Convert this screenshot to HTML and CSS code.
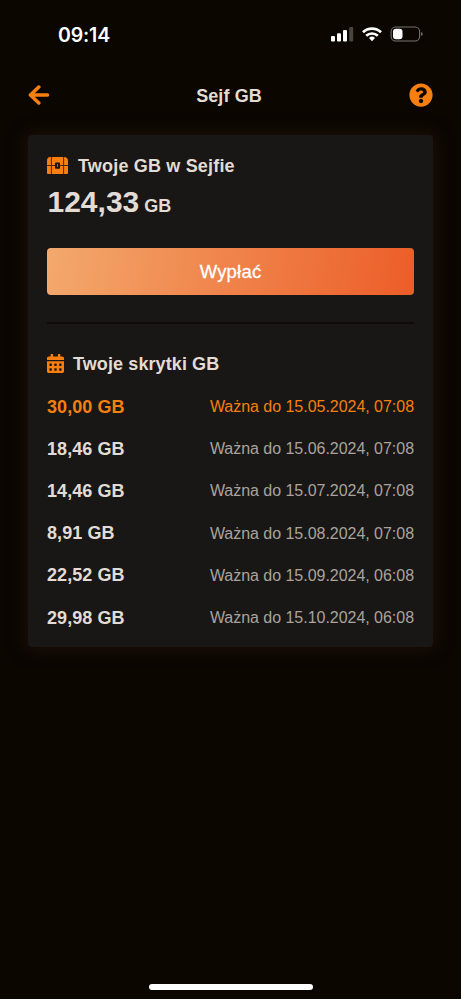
FILE: index.html
```html
<!DOCTYPE html>
<html lang="pl">
<head>
<meta charset="utf-8">
<title>Sejf GB</title>
<link rel="stylesheet" href="styles.css">
</head>
<body>
<div class="screen">
  <div class="status">
    <span class="time">09:14</span>
    <svg class="indicators" width="94" height="18" viewBox="0 0 94 18">
      <g fill="#fff">
        <rect x="1" y="11" width="4" height="5.5" rx="1.1"/>
        <rect x="7" y="8.3" width="4" height="8.2" rx="1.1"/>
        <rect x="13" y="5" width="4" height="11.5" rx="1.1"/>
        <rect x="19.2" y="2" width="4" height="14.5" rx="1.1" opacity=".25"/>
        <path d="M42 16.2l-3-3.2a4.4 4.4 0 0 1 6 0z"/>
      </g>
      <g fill="none" stroke="#fff" stroke-width="2.7">
        <path d="M36.2 10.8a8.5 8.5 0 0 1 11.6 0"/>
        <path d="M33 7.2a13 13 0 0 1 18 0"/>
      </g>
      <rect x="61.1" y="2" width="28.5" height="14" rx="4.6" fill="none" stroke="#77736d" stroke-width="1.1"/>
      <rect x="63" y="3.8" width="9.5" height="10.5" rx="3" fill="#fff"/>
      <path d="M91.1 6.9q1.600.6 1.600 2.100t-1.600 2.100z" fill="#77736d"/>
    </svg>
  </div>
  <header class="topbar">
    <svg width="22" height="20" viewBox="0 0 22 20" fill="none" stroke="#f77f10" stroke-width="3.5" stroke-linecap="round" stroke-linejoin="round"><path d="M10.800 2L2.400 10l8.400 8M3 10h16.500"/></svg>
    <h1>Sejf GB</h1>
    <svg width="24" height="24" viewBox="0 0 512 512" fill="#f77f10"><path d="M504 256c0 136.997-111.043 248-248 248S8 392.997 8 256C8 119.083 119.043 8 256 8s248 111.083 248 248zM262.655 90c-54.497 0-89.255 22.957-116.549 63.758-3.536 5.286-2.353 12.415 2.715 16.258l34.699 26.31c5.205 3.947 12.621 3.008 16.665-2.122 17.864-22.658 30.113-35.797 57.303-35.797 20.429 0 45.698 13.148 45.698 32.958 0 14.976-12.363 22.667-32.534 33.976C247.128 238.528 216 254.941 216 296v4c0 6.627 5.373 12 12 12h56c6.627 0 12-5.373 12-12v-1.333c0-28.462 83.186-29.647 83.186-106.667 0-58.002-60.165-102-116.531-102zM256 338c-25.365 0-46 20.635-46 46 0 25.364 20.635 46 46 46s46-20.636 46-46c0-25.365-20.635-46-46-46z"/></svg>
  </header>
  <main class="card">
    <h2 class="heading vault">
      <svg width="21" height="17" viewBox="0 0 21 17"><path fill="#f77f10" d="M3.200 0h13.600Q21 .2 21 4v12q0 1-1 1H1q-1 0-1-1V4Q0 .2 3.200 0z"/><path d="M4.400 0v17M16.600 0v17M0 8.500h21" fill="none" stroke="#4a2a10" stroke-width="1"/><rect x="8" y="5.500" width="5" height="6.200" rx=".8" fill="#1b1510"/><path d="M10 7h1v3h-1z" fill="#b9640f"/></svg>
      <span>Twoje GB w Sejfie</span>
    </h2>
    <p class="total"><span class="amount">124,33</span><span class="unit">GB</span></p>
    <button class="withdraw">Wypłać</button>
    <hr>
    <h2 class="heading lockers">
      <svg width="17" height="19" viewBox="0 0 448 512" preserveAspectRatio="none" fill="#f77f10"><path d="M0 464c0 26.500 21.500 48 48 48h352c26.500 0 48-21.500 48-48V192H0v272zm320-196c0-6.600 5.400-12 12-12h40c6.600 0 12 5.400 12 12v40c0 6.600-5.400 12-12 12h-40c-6.600 0-12-5.400-12-12v-40zm0 128c0-6.600 5.400-12 12-12h40c6.600 0 12 5.400 12 12v40c0 6.600-5.400 12-12 12h-40c-6.600 0-12-5.400-12-12v-40zM192 268c0-6.600 5.400-12 12-12h40c6.600 0 12 5.400 12 12v40c0 6.600-5.400 12-12 12h-40c-6.600 0-12-5.400-12-12v-40zm0 128c0-6.600 5.400-12 12-12h40c6.600 0 12 5.400 12 12v40c0 6.600-5.400 12-12 12h-40c-6.600 0-12-5.400-12-12v-40zM64 268c0-6.600 5.400-12 12-12h40c6.600 0 12 5.400 12 12v40c0 6.600-5.400 12-12 12H76c-6.600 0-12-5.400-12-12v-40zm0 128c0-6.600 5.400-12 12-12h40c6.600 0 12 5.400 12 12v40c0 6.600-5.400 12-12 12H76c-6.600 0-12-5.400-12-12v-40zM400 64h-48V16c0-8.800-7.200-16-16-16h-32c-8.800 0-16 7.200-16 16v48H160V16c0-8.800-7.200-16-16-16h-32c-8.800 0-16 7.200-16 16v48H48C21.500 64 0 85.500 0 112v48h448v-48c0-26.500-21.500-48-48-48z"/></svg>
      <span>Twoje skrytki GB</span>
    </h2>
    <ul class="list">
      <li class="current"><b>30,00 GB</b><span>Ważna do 15.05.2024, 07:08</span></li>
      <li><b>18,46 GB</b><span>Ważna do 15.06.2024, 07:08</span></li>
      <li><b>14,46 GB</b><span>Ważna do 15.07.2024, 07:08</span></li>
      <li><b>8,91 GB</b><span>Ważna do 15.08.2024, 07:08</span></li>
      <li><b>22,52 GB</b><span>Ważna do 15.09.2024, 06:08</span></li>
      <li><b>29,98 GB</b><span>Ważna do 15.10.2024, 06:08</span></li>
    </ul>
  </main>
  <div class="home"></div>
</div>
</body>
</html>
```
FILE: styles.css
```css
* { box-sizing: border-box; margin: 0; padding: 0; }
body { background: #0b0600; color: #e3dcd5; font-family: "Liberation Sans", Arial, sans-serif; }
.screen { height: 999px; display: flex; flex-direction: column; overflow: hidden; }
.status { height: 68px; padding: 0 37px 0 58px; display: flex; align-items: center; justify-content: space-between; }
.time { font: 600 19.5px/24px Inter, sans-serif; color: #fff; letter-spacing: -.15px; padding-top: 1px; }
.topbar { height: 54px; padding: 0 28px 0 28px; display: flex; align-items: center; justify-content: space-between; }
h1 { font-size: 18px; line-height: 24px; padding-top: 1px; margin-left: -1px; letter-spacing: .1px; }
.card { margin: 13px 28px 0; height: 512px; padding: 19px 19px 0; border-radius: 4px; background: #181715; box-shadow: 0 0 16px 3px #1b1108; display: flex; flex-direction: column; }
.heading { display: flex; align-items: center; font-size: 18px; line-height: 24px; height: 24px; flex: none; }
.heading svg { margin-bottom: 1px; }
.vault { gap: 10px; letter-spacing: .18px; }
.lockers { gap: 9px; letter-spacing: .1px; }
.lockers svg { margin-bottom: 2px; }
.total { height: 44px; flex: none; display: flex; align-items: baseline; gap: 5px; font-weight: bold; }
.amount { font-size: 30px; line-height: 48px; margin-left: .5px; }
.unit { font-size: 18px; }
.withdraw { margin-top: 25.5px; height: 47px; flex: none; border: 0; border-radius: 4px; background: linear-gradient(100deg, #f3a96d, #ec5d28); color: #fff; font: 18.5px/47px "Liberation Sans", Arial, sans-serif; letter-spacing: .2px; -webkit-text-stroke: .3px #fff; }
hr { height: 2px; border: 0; margin: 27.500px 0 28px; background: #0f0c08; flex: none; }
.list { list-style: none; margin-top: 10px; }
.list li { height: 42.2px; display: flex; align-items: center; justify-content: space-between; }
.list b { font-size: 18px; letter-spacing: .07px; }
.list span { font-size: 16px; color: #aaa39d; letter-spacing: -.03px; }
.list .current, .list .current span { color: #f77f10; }
.home { width: 164px; height: 6px; border-radius: 3px; background: #fff; margin: auto auto 9px; }
```
